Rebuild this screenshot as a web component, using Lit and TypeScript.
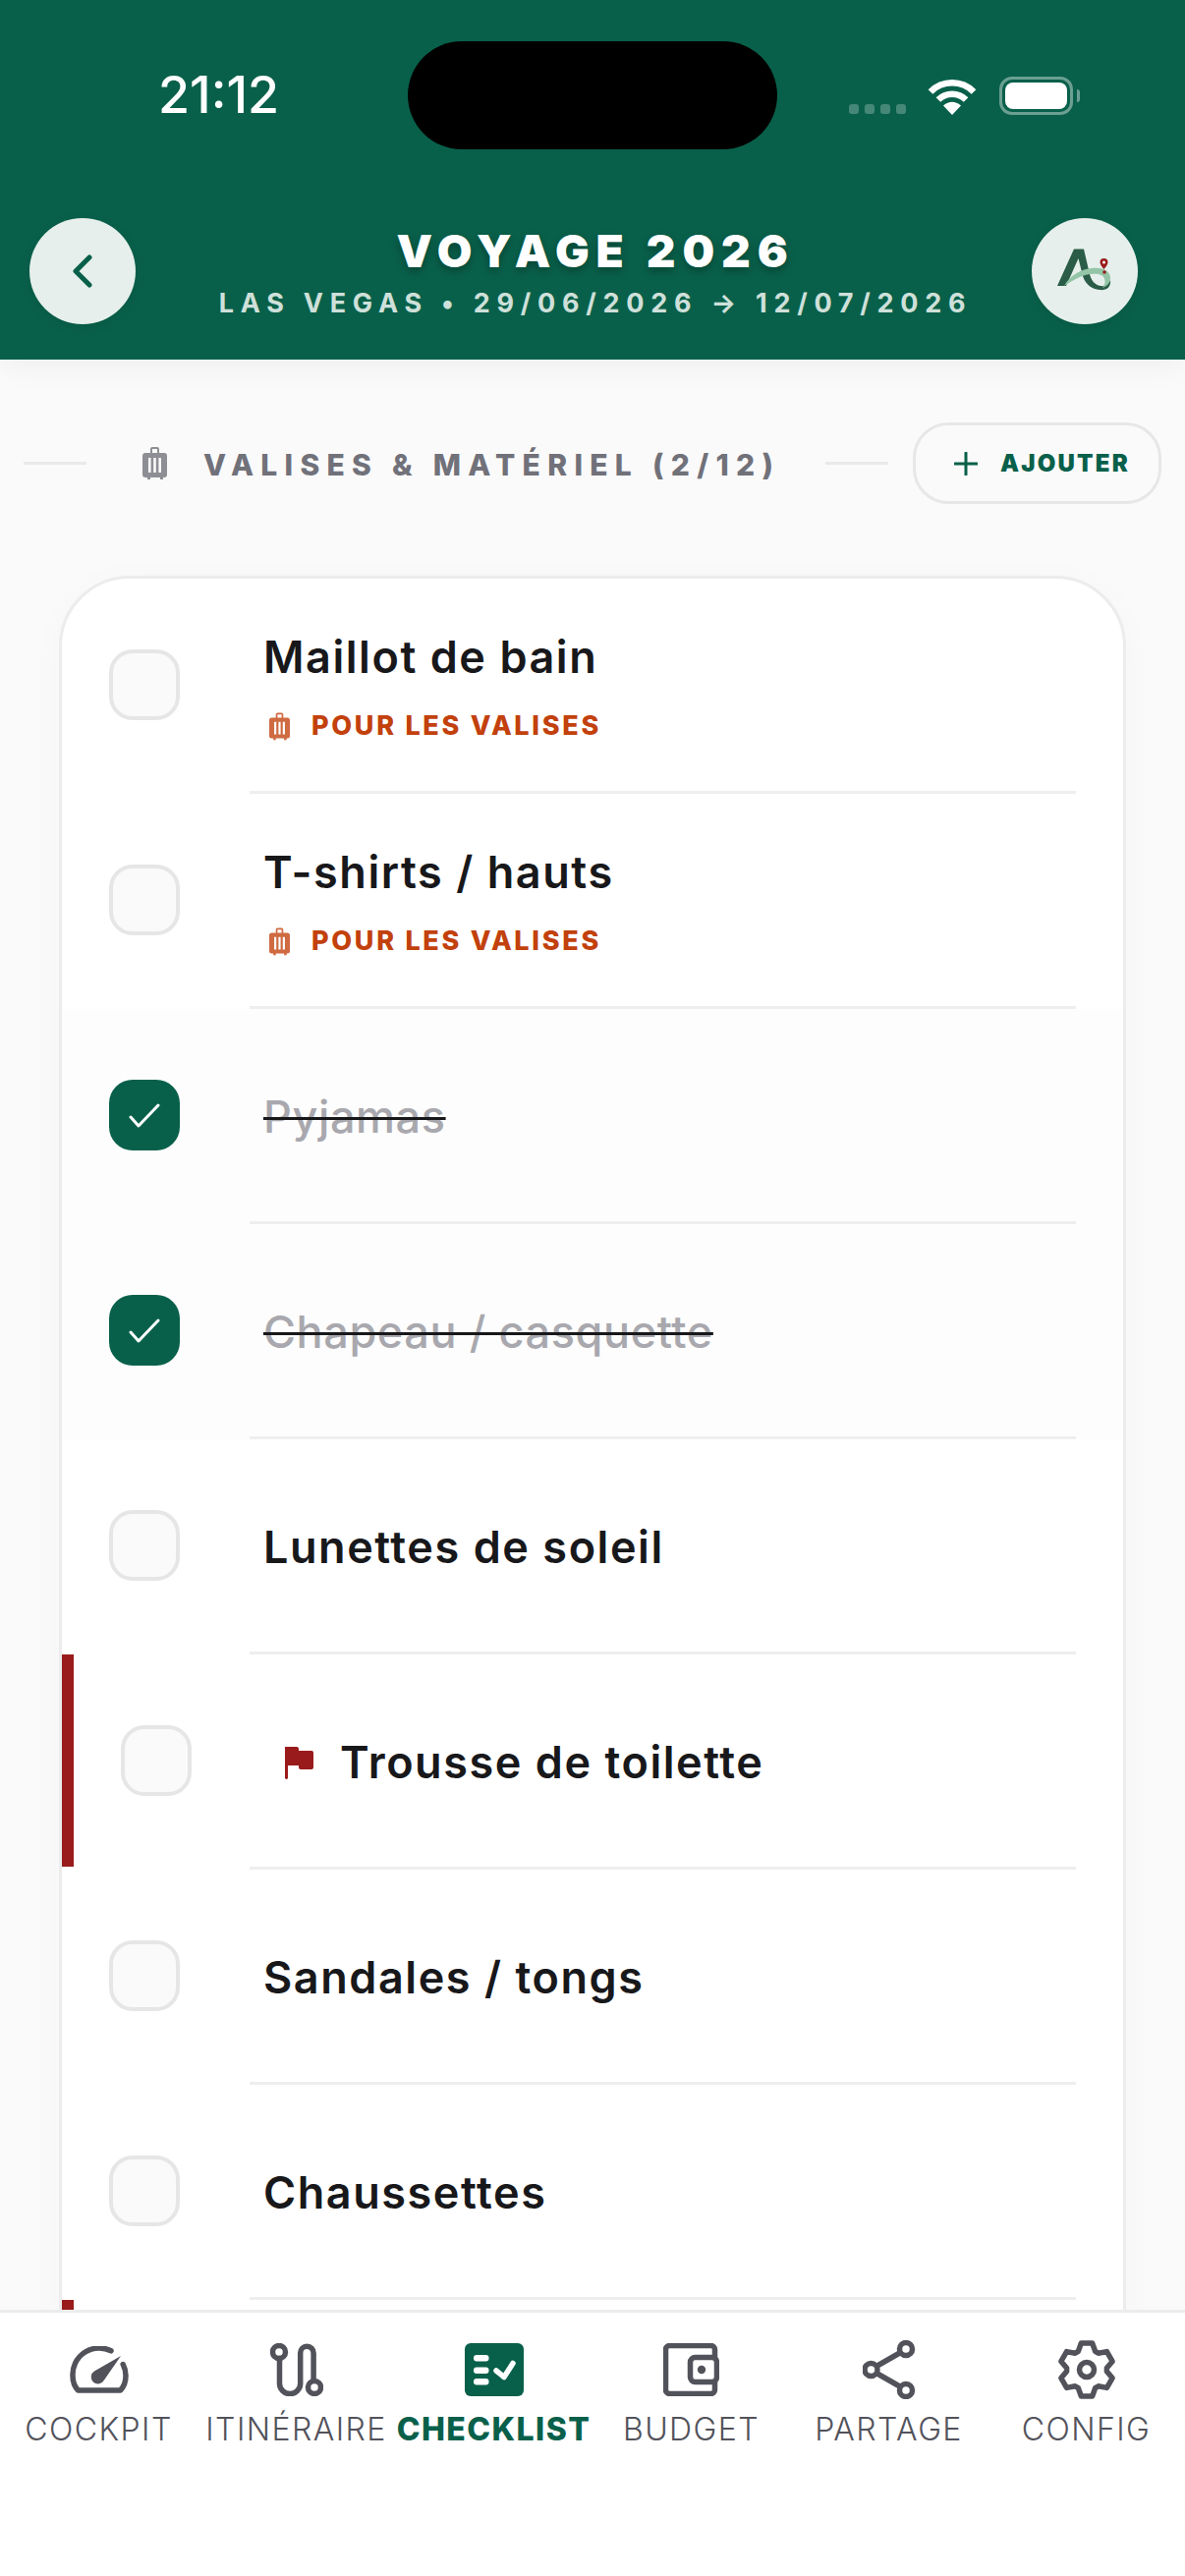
import { LitElement, html, css, svg } from 'lit';
import { customElement } from 'lit/decorators.js';
import { classMap } from 'lit/directives/class-map.js';

interface Item {
  name: string;
  done?: boolean;
  flag?: boolean;
  tag?: string;
}

// the ninth row only shows its top edge above the tab bar, its label is out of view
const ITEMS: Item[] = [
  { name: 'Maillot de bain', tag: 'POUR LES VALISES' },
  { name: 'T-shirts / hauts', tag: 'POUR LES VALISES' },
  { name: 'Pyjamas', done: true },
  { name: 'Chapeau / casquette', done: true },
  { name: 'Lunettes de soleil' },
  { name: 'Trousse de toilette', flag: true },
  { name: 'Sandales / tongs' },
  { name: 'Chaussettes' },
  { name: '', flag: true },
];

// six teeth, computed so they stay regular
function gearPath() {
  const pt = (deg: number, r: number) => {
    const a = (deg * Math.PI) / 180;
    return `${(30 + r * Math.cos(a)).toFixed(2)} ${(30 + r * Math.sin(a)).toFixed(2)}`;
  };
  const parts: string[] = [];
  for (let i = 0; i < 6; i++) {
    const a = i * 60 - 90;
    parts.push(pt(a - 25, 20.5), pt(a - 12, 27.5), pt(a + 12, 27.5), pt(a + 25, 20.5));
  }
  return 'M' + parts.join(' L') + ' Z';
}

const suitcase = (cls: string) => html`<svg class=${cls} viewBox="0 0 25 34" fill="currentColor">
  <path d="M8 8V3a2 2 0 0 1 2-2h5a2 2 0 0 1 2 2v5h-2V3h-5v5z" />
  <path fill-rule="evenodd" d="M3 7h19a3 3 0 0 1 3 3v19a3 3 0 0 1-3 3h-1v2h-3v-2H8v2H5v-2H3a3 3 0 0 1-3-3V10a3 3 0 0 1 3-3zM6 12v15h2.600V12zM11.200 12v15h2.600V12zM16.400 12v15H19V12z" />
</svg>`;

const NAV = [
  {
    label: 'COCKPIT',
    w: 60,
    h: 48,
    icon: svg`<path d="M42 4.800A27 27 0 0 0 3 30c0 6 2 11.500 5.500 15h43c3.500-3.500 5.500-9 5.500-15 0-4-1-8-2.800-11.500" fill="none" stroke="currentColor" stroke-width="5.500" stroke-linecap="round" stroke-linejoin="round"/><path d="M52 10 35 34.500a7 7 0 1 1-10-9z" fill="currentColor"/>`,
  },
  {
    label: 'ITINÉRAIRE',
    w: 54,
    h: 54,
    icon: svg`<g fill="none" stroke="currentColor" stroke-width="5.500" stroke-linecap="round"><circle cx="9" cy="9" r="6.500"/><path d="M9.500 15.500V41a10.600 10.600 0 0 0 21.200 0V10a6.700 6.700 0 0 1 13.400 0v27"/><circle cx="45" cy="45" r="6.500"/></g>`,
  },
  {
    label: 'CHECKLIST',
    w: 60,
    h: 54,
    active: true,
    icon: svg`<rect width="60" height="54" rx="6" fill="currentColor"/><g fill="#fff"><rect x="9" y="12" width="15.500" height="6.500" rx="3"/><rect x="9" y="24.500" width="15.500" height="6.500" rx="3"/><rect x="9" y="36" width="15.500" height="6.500" rx="3"/></g><path d="M32 28l8 6.500 9-14" fill="none" stroke="#fff" stroke-width="5.500" stroke-linecap="round" stroke-linejoin="round"/>`,
  },
  {
    label: 'BUDGET',
    w: 57,
    h: 54,
    icon: svg`<rect x="2.500" y="2.500" width="50" height="49" rx="4" fill="none" stroke="currentColor" stroke-width="5.500"/><rect x="27.500" y="14.500" width="27" height="25" rx="5" fill="#fff" stroke="currentColor" stroke-width="5.500"/><circle cx="39" cy="27" r="4.200" fill="currentColor"/>`,
  },
  {
    label: 'PARTAGE',
    w: 54,
    h: 60,
    icon: svg`<g fill="none" stroke="currentColor" stroke-width="5.500"><circle cx="44" cy="9" r="6.500"/><circle cx="8.500" cy="30" r="6.500"/><circle cx="44" cy="51" r="6.500"/><path d="M14 26.500 38.500 12.500M14 33.500l24.500 14"/></g>`,
  },
  {
    label: 'CONFIG',
    w: 60,
    h: 60,
    icon: svg`<g fill="none" stroke="currentColor" stroke-width="5.500" stroke-linejoin="round"><path d=${gearPath()}/><circle cx="30" cy="30" r="7.500"/></g>`,
  },
];

@customElement('app-root')
export class AppRoot extends LitElement {
  static styles = css`
    :host {
      display: block;
      font-family: Inter, 'Noto Sans', sans-serif;
      color: #18181b;
    }
    .page {
      height: 2622px;
      display: flex;
      flex-direction: column;
      overflow: hidden;
      background: #fafafa;
    }

    /* header */
    .header {
      height: 366px;
      flex: none;
      background: #09604a;
      color: #fff;
      box-shadow: 0 6px 30px rgba(0, 0, 0, 0.05);
      position: relative;
      z-index: 1;
    }
    .status {
      display: flex;
      align-items: center;
      height: 110px;
      padding: 42px 0 0 161px;
    }
    .time {
      width: 254px;
      font-size: 52px;
      font-weight: 500;
      line-height: 1;
    }
    .island {
      width: 376px;
      height: 110px;
      border-radius: 55px;
      background: #000;
    }
    .sys {
      display: flex;
      align-items: flex-end;
      height: 39px;
      margin-left: 73px;
    }
    .dots {
      display: flex;
      gap: 6px;
      margin-right: 22px;
      margin-bottom: 1px;
    }
    .dots span {
      width: 10px;
      height: 10px;
      border-radius: 3px;
      background: rgba(255, 255, 255, 0.25);
    }
    .wifi {
      width: 50px;
      height: 37px;
      margin-right: 23px;
    }
    .battery {
      box-sizing: border-box;
      width: 75px;
      height: 39px;
      padding: 3px;
      border: 3px solid rgba(255, 255, 255, 0.4);
      border-radius: 13px;
    }
    .battery i {
      display: block;
      height: 100%;
      border-radius: 8px;
      background: #fff;
    }
    .tip {
      width: 3px;
      height: 13px;
      margin: 0 0 13px 4px;
      border-radius: 0 3px 3px 0;
      background: rgba(255, 255, 255, 0.4);
    }
    .bar {
      display: flex;
      align-items: center;
      justify-content: space-between;
      padding: 70px 48px 0 30px;
    }
    .round {
      width: 108px;
      height: 108px;
      flex: none;
      display: flex;
      align-items: center;
      justify-content: center;
      border-radius: 50%;
      background: #e6efeb;
      box-shadow: 0 3px 12px rgba(0, 0, 0, 0.08);
      color: #09604a;
    }
    .chev {
      width: 20px;
      height: 34px;
    }
    .logo {
      width: 90px;
      height: 70px;
    }
    .heading {
      flex: 1;
      padding: 3px 0 0 24px;
      text-align: center;
      white-space: nowrap;
    }
    .heading h1 {
      margin: 0;
      font-size: 46px;
      font-weight: 900;
      line-height: 50px;
      letter-spacing: 0.15em;
      text-shadow: 0 4px 8px rgba(0, 0, 0, 0.3);
    }
    .heading p {
      margin: 13px 0 0;
      font-size: 27px;
      font-weight: 700;
      line-height: 32px;
      letter-spacing: 0.25em;
      color: #cfe0da;
    }

    /* section */
    .main {
      flex: 1;
      min-height: 0;
      overflow: hidden;
      padding-top: 64px;
    }
    .section {
      display: flex;
      align-items: center;
      height: 83px;
      padding: 0 24px;
    }
    .rule {
      width: 64px;
      height: 3px;
      background: #e9e9ea;
      flex: none;
    }
    .sec-ico {
      width: 25px;
      height: 34px;
      margin: -2px 37px 0 57px;
      color: #8e8e95;
      flex: none;
    }
    .sec-label {
      width: 633px;
      flex: none;
      padding-top: 2px;
      font-size: 30px;
      font-weight: 800;
      letter-spacing: 7.3px;
      line-height: 36px;
      color: #71717a;
      white-space: nowrap;
    }
    .add {
      box-sizing: border-box;
      width: 253px;
      height: 83px;
      margin-left: 25px;
      padding-left: 39px;
      display: flex;
      align-items: center;
      border: 3px solid #e7e7e8;
      border-radius: 36px;
      color: #09604a;
      font-size: 24px;
      font-weight: 900;
      letter-spacing: 2.2px;
      white-space: nowrap;
    }
    .plus {
      width: 24px;
      height: 24px;
      margin-right: 23px;
    }

    /* list */
    .card {
      box-sizing: border-box;
      width: 1086px;
      margin: 73px 0 0 60px;
      border: 3px solid #ececed;
      border-radius: 72px 72px 0 0;
      background: #fff;
      box-shadow: 0 6px 40px rgba(0, 0, 0, 0.025);
      overflow: hidden;
    }
    .row {
      display: flex;
      align-items: center;
      justify-content: space-between;
      height: 219px;
      padding: 0 48px;
    }
    .row.done {
      background: #fdfdfd;
    }
    .row.flag {
      padding-left: 60px;
      background: linear-gradient(#991b1b, #991b1b) left top / 12px 216px no-repeat;
    }
    .box {
      box-sizing: border-box;
      width: 72px;
      height: 72px;
      flex: none;
      display: flex;
      align-items: center;
      justify-content: center;
      margin-bottom: 3px;
      border: 4px solid #e6e6e7;
      border-radius: 24px;
      background: #fafafa;
    }
    .box.on {
      border: none;
      background: #09604a;
    }
    .box svg {
      width: 32px;
      height: 25px;
    }
    .body {
      box-sizing: border-box;
      width: 841px;
      height: 219px;
      padding: 3px 0 0 14px;
      display: flex;
      flex-direction: column;
      justify-content: center;
      border-bottom: 3px solid #eeeeef;
    }
    .name {
      display: flex;
      align-items: center;
      font-size: 45px;
      font-weight: 600;
      line-height: 54px;
      letter-spacing: 1.55px;
      white-space: nowrap;
    }
    .done .name {
      color: #a8a8ae;
      font-weight: 500;
      letter-spacing: 0.6px;
      text-decoration: line-through #18181b 3px;
    }
    .flag-ico {
      width: 30px;
      height: 34px;
      margin: 0 27px 0 21px;
      color: #991b1b;
      flex: none;
    }
    .tag {
      display: flex;
      align-items: center;
      margin-top: 27px;
      font-size: 27px;
      font-weight: 800;
      line-height: 32px;
      letter-spacing: 0.1em;
      color: #c2410c;
      white-space: nowrap;
    }
    .tag-ico {
      width: 21px;
      height: 30px;
      margin: 0 22px 0 6px;
      opacity: 0.78;
      flex: none;
    }

    /* tab bar */
    .nav {
      flex: none;
      height: 271px;
      box-sizing: border-box;
      display: grid;
      grid-template-columns: repeat(6, 201px);
      border-top: 3px solid #ececed;
      background: #fff;
      color: #52525b;
      position: relative;
    }
    .tab {
      display: flex;
      flex-direction: column;
      align-items: center;
      padding-top: 28px;
    }
    .tab .slot {
      height: 60px;
      display: flex;
      align-items: center;
      justify-content: center;
    }
    .tab span {
      margin-top: 12px;
      font-size: 32px;
      font-weight: 300;
      line-height: 38px;
      letter-spacing: 0.045em;
      white-space: nowrap;
    }
    .tab.active {
      color: #09604a;
    }
    .tab.active span {
      font-weight: 800;
    }
  `;

  renderRow(item: Item) {
    return html`<div class=${classMap({ row: true, done: !!item.done, flag: !!item.flag })}>
      <div class=${classMap({ box: true, on: !!item.done })}>
        ${item.done
          ? html`<svg viewBox="0 0 32 25"><path d="M2 14l8 9L30 2" fill="none" stroke="#fff" stroke-width="3" stroke-linecap="round" stroke-linejoin="round" /></svg>`
          : ''}
      </div>
      <div class="body">
        <div class="name">
          ${item.flag
            ? html`<svg class="flag-ico" viewBox="0 0 30 34" fill="currentColor"><path d="M1 1h12q2 0 2 2v2h13q2 0 2 2v15q0 2-2 2H17q-2 0-2-2v-2H4v13q-1.500 2-3 0z" /></svg>`
            : ''}
          <span>${item.name}</span>
        </div>
        ${item.tag ? html`<div class="tag">${suitcase('tag-ico')}<span>${item.tag}</span></div>` : ''}
      </div>
    </div>`;
  }

  render() {
    return html`<div class="page">
      <header class="header">
        <div class="status">
          <div class="time">21:12</div>
          <div class="island"></div>
          <div class="sys">
            <div class="dots"><span></span><span></span><span></span><span></span></div>
            <svg class="wifi" viewBox="0 0 50 37">
              <g fill="none" stroke="#fff" stroke-width="6.500">
                <path d="M3 13.500a31 31 0 0 1 44 0" />
                <path d="M10.900 21.500a20 20 0 0 1 28.200 0" />
              </g>
              <path d="M25 37 16 27.500q9-7.500 18 0z" fill="#fff" />
            </svg>
            <div class="battery"><i></i></div>
            <div class="tip"></div>
          </div>
        </div>
        <div class="bar">
          <div class="round">
            <svg class="chev" viewBox="0 0 20 34"><path d="M17 3 3 17l14 14" fill="none" stroke="currentColor" stroke-width="5" stroke-linecap="round" stroke-linejoin="round" /></svg>
          </div>
          <div class="heading">
            <h1>VOYAGE 2026</h1>
            <p>LAS VEGAS • 29/06/2026 → 12/07/2026</p>
          </div>
          <div class="round">
            <svg class="logo" viewBox="0 0 90 70">
              <path d="M17 50 34 12.500h10L49.500 36c1.500 8 5.500 13 11.500 14 5 1 9-3 10-6 1 7-4 11-11 10-8-1-14-5-17-14L38.500 22 26 50z" fill="#2a5c48" />
              <path d="M24 50c7-12 18-17 28-18 10-1 19 2 19 10 0 6-5 9-8 10 4-5 4-12-4-14-13-2-24 5-35 12z" fill="#93c5a6" />
              <path d="M64.500 22a4 4 0 0 1 4 4c0 2.500-2.500 5-4 7-1.500-2-4-4.500-4-7a4 4 0 0 1 4-4z" fill="#991b1b" />
              <circle cx="64.500" cy="26" r="1.500" fill="#fff" />
              <circle cx="65" cy="36" r="1.800" fill="#991b1b" />
            </svg>
          </div>
        </div>
      </header>

      <main class="main">
        <div class="section">
          <div class="rule"></div>
          ${suitcase('sec-ico')}
          <div class="sec-label">VALISES &amp; MATÉRIEL (2/12)</div>
          <div class="rule"></div>
          <div class="add">
            <svg class="plus" viewBox="0 0 24 24"><path d="M12 1v22M1 12h22" fill="none" stroke="currentColor" stroke-width="3" stroke-linecap="round" /></svg>
            AJOUTER
          </div>
        </div>
        <div class="card">${ITEMS.map((item) => this.renderRow(item))}</div>
      </main>

      <nav class="nav">
        ${NAV.map(
          (t) => html`<div class=${classMap({ tab: true, active: !!t.active })}>
            <div class="slot">
              <svg width=${t.w} height=${t.h} viewBox="0 0 ${t.w} ${t.h}">${t.icon}</svg>
            </div>
            <span>${t.label}</span>
          </div>`
        )}
      </nav>
    </div>`;
  }
}
